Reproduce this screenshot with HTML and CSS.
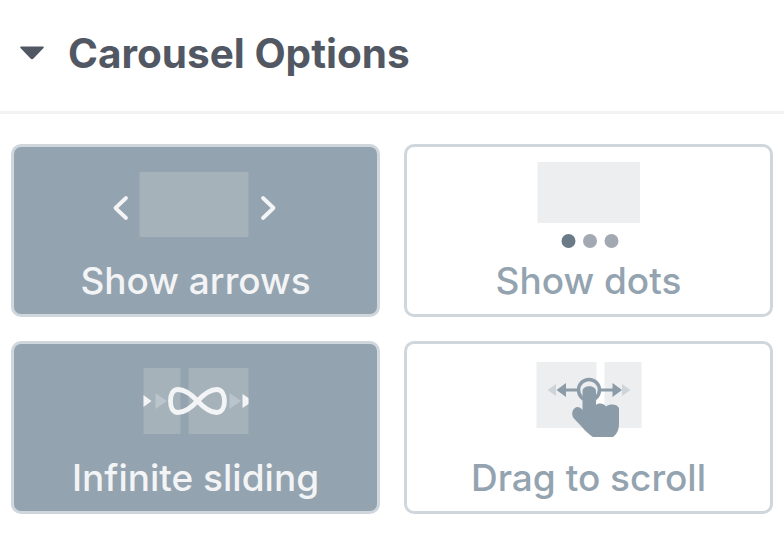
FILE: index.html
```html
<!DOCTYPE html>
<html lang="en">
<head>
<meta charset="utf-8">
<title>Carousel Options</title>
<link rel="stylesheet" href="styles.css">
</head>
<body>
<section class="panel">
  <header class="panel-head">
    <svg class="caret" viewBox="0 0 26 16" aria-hidden="true"><path d="M2 1.500H24Q25.500 1.500 24.500 3L14.500 13.500Q13 15 11.500 13.500L1.500 3Q.5 1.500 2 1.500Z"/></svg>
    <h2 class="panel-title">Carousel Options</h2>
  </header>
  <div class="options">
    <div class="option is-on">
      <svg class="art" viewBox="0 0 200 104" aria-hidden="true">
        <rect x="43.500" y="25" width="109" height="65" fill="#a5b2ba"/>
        <path d="M30 51 L19.500 61 L30 71" fill="none" stroke="#f3f4f5" stroke-width="3.800" stroke-linecap="round" stroke-linejoin="round"/>
        <path d="M167 51 L177.500 61 L167 71" fill="none" stroke="#f3f4f5" stroke-width="3.800" stroke-linecap="round" stroke-linejoin="round"/>
      </svg>
      <span class="label">Show arrows</span>
    </div>
    <div class="option">
      <svg class="art" viewBox="0 0 200 104" aria-hidden="true">
        <rect x="48.500" y="15" width="102.500" height="61" fill="#edeef0"/>
        <circle cx="79.500" cy="94" r="7" fill="#6b7a87"/>
        <circle cx="101" cy="94" r="7" fill="#a3a9b2"/>
        <circle cx="122.500" cy="94" r="7" fill="#a3a9b2"/>
      </svg>
      <span class="label">Show dots</span>
    </div>
    <div class="option is-on">
      <svg class="art" viewBox="0 0 200 104" aria-hidden="true">
        <rect x="47.500" y="24" width="37" height="66" fill="#a5b2ba"/>
        <rect x="92.500" y="24" width="60" height="66" fill="#a5b2ba"/>
        <path d="M47.500 51V63L55.500 57Z" fill="#f3f4f5"/>
        <path d="M59.500 49V65L71 57Z" fill="#b9c4cb"/>
        <path d="M145.500 49V65L134 57Z" transform="matrix(-1 0 0 1 279 0)" fill="#b9c4cb"/>
        <path d="M146.500 50V64L152.500 60V54Z" fill="#f3f4f5"/>
        <path d="M101.500 57C94 49 88 45.500 82 45.500C76.500 45.500 74.500 51 74.500 57C74.500 63 76.500 68.500 82 68.500C88 68.500 94 65 101.500 57C109 49 115 45.500 120.500 45.500C126 45.500 128.500 51 128.500 57C128.500 63 126 68.500 120.500 68.500C115 68.500 109 65 101.500 57Z" fill="none" stroke="#f3f4f5" stroke-width="4.800"/>
      </svg>
      <span class="label">Infinite sliding</span>
    </div>
    <div class="option">
      <svg class="art" viewBox="0 0 200 104" aria-hidden="true">
        <rect x="47.500" y="18" width="60" height="66" fill="#edeef0"/>
        <rect x="115.500" y="18" width="37" height="66" fill="#edeef0"/>
        <path d="M58.500 46L67 40V52Z M141.500 46L133 40V52Z" fill="#cdd5da"/>
        <path d="M70 46H131" stroke="#8b9ba8" stroke-width="2.800"/>
        <path d="M67.500 46L77 39V53Z M133 46L123.500 39V53Z" fill="#8b9ba8"/>
        <circle cx="100" cy="46" r="10.500" fill="#edeef0" stroke="#8b9ba8" stroke-width="3.500"/>
        <path d="M93.500 47C93.500 40.500 107 40.500 107 47V61C110 58.500 115 59.500 117 62.500C121 59.500 128 60 130 64L130 79C130 86 128 90 124 93H104C100 90 97 88 93 83L84.500 74C81.500 69 84 64 88 63C90.500 63 92 64 93.500 66Z" fill="#8b9ba8"/>
      </svg>
      <span class="label">Drag to scroll</span>
    </div>
  </div>
</section>
</body>
</html>
```
FILE: styles.css
```css
* { box-sizing: border-box; }
html, body { margin: 0; background: #fff; }
body { font-family: Inter, "Noto Sans", sans-serif; }
.panel { width: 784px; height: 534px; overflow: hidden; }
.panel-head {
  height: 114px;
  border-bottom: 3px solid #f1f2f3;
  display: flex;
  align-items: center;
  padding: 0 0 0 19px;
  gap: 23px;
}
.caret { width: 26px; height: 16px; fill: #515863; margin-top: -6px; flex: none; }
.panel-title {
  margin: -4px 0 0;
  font-size: 40.500px;
  font-weight: 700;
  line-height: 44px;
  color: #515863;
}
.options {
  display: grid;
  grid-template-columns: 369px 369px;
  grid-auto-rows: 173px;
  column-gap: 24px;
  row-gap: 24px;
  padding: 30px 11px 0;
}
.option {
  border: 3px solid #d0d7dc;
  border-radius: 10px;
  background: #fff;
  display: flex;
  flex-direction: column;
  align-items: center;
  color: #94a3b0;
}
.option.is-on { background: #94a3b0; color: #f3f4f5; }
.art { width: 200px; height: 104px; flex: none; display: block; }
.label { font-size: 37px; font-weight: 450; line-height: 60px; white-space: nowrap; }
```
